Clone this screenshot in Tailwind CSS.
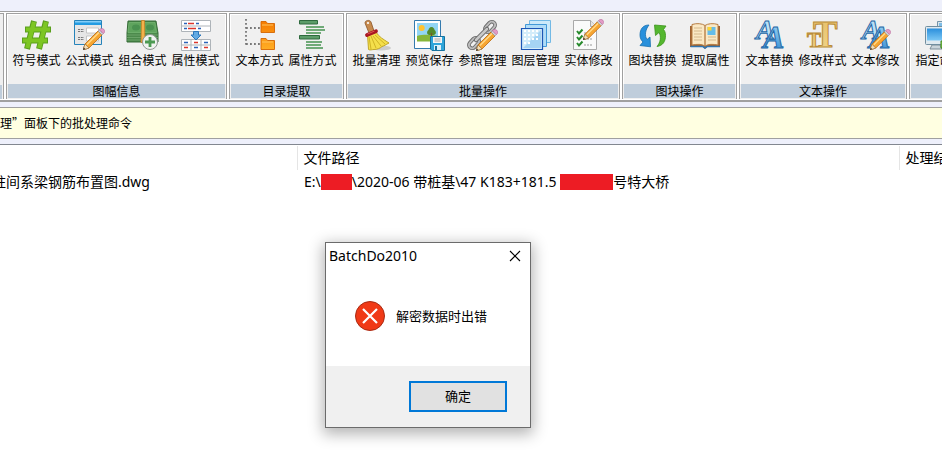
<!DOCTYPE html>
<html lang="zh-CN">
<head>
<meta charset="utf-8">
<meta name="viewport" content="width=device-width, initial-scale=1">
<title>BatchDo2010</title>
<script src="https://cdn.jsdelivr.net/npm/@tailwindcss/browser@4"></script>
</head>
<body class="relative min-h-screen overflow-hidden bg-white font-['Noto_Sans','Noto_Sans_CJK_SC',sans-serif] text-black">

<svg class="absolute size-0" aria-hidden="true">
  <defs>
    <linearGradient id="blue" x1="0" y1="0" x2="0" y2="1"><stop offset="0" stop-color="#a9defa"/><stop offset="1" stop-color="#2c86d0"/></linearGradient>
    <linearGradient id="screen" x1="0" y1="0" x2="0" y2="1"><stop offset="0" stop-color="#2b8fdc"/><stop offset="1" stop-color="#7cc8f5"/></linearGradient>
    <linearGradient id="gold" x1="0" y1="0" x2="0" y2="1"><stop offset="0" stop-color="#e6bd66"/><stop offset="1" stop-color="#f1d68c"/></linearGradient>
    <linearGradient id="folder" x1="0" y1="0" x2="0" y2="1"><stop offset="0" stop-color="#f57c00"/><stop offset="1" stop-color="#ffad24"/></linearGradient>
    <symbol id="pencil" viewBox="0 0 22 22">
      <path d="M0 22 2 16 15 3l4 4L6 20z" fill="#f7a531" stroke="#b9680f" stroke-width=".8"/>
      <path d="M4 16.500 16 4.500" stroke="#ffdb8b" stroke-width="1.400"/>
      <path d="M0 22 2 16l4 4z" fill="#f5dfb8" stroke="#8b6a3d" stroke-width=".6"/>
      <path d="m0 22 .8-2.400L2.400 21z" fill="#333"/>
      <path d="m15 3 1.300-1.300 4 4L19 7z" fill="#d5d9de" stroke="#888" stroke-width=".5"/>
      <path d="M16.300 1.700C18-.2 19.500.2 20.800 1.300c1.500 1.400 1.300 3-.5 4.400z" fill="#e39bc5" stroke="#b56b9b" stroke-width=".6"/>
    </symbol>
    <symbol id="letters" viewBox="0 0 33 33">
      <g font-family="Liberation Serif" font-style="italic" font-weight="bold" stroke="#2467a6" stroke-width="1">
        <text x="3" y="20" font-size="28" fill="#b9e0f6">A</text>
        <text x="10" y="29" font-size="32" fill="url(#blue)">A</text>
      </g>
    </symbol>
  </defs>
</svg>

<header class="bg-[#eef0fb] pt-[11px] pb-[5px]">
  <nav aria-label="功能区" class="flex gap-[2px] overflow-hidden border-t border-b-2 border-[#a0a0a0] bg-white pt-px pb-px font-['Noto_Sans_CJK_SC',sans-serif] text-xs">
    <div class="flex w-1 shrink-0 flex-col border-t border-r border-[#a0a0a0] bg-[#f0f0f0]"><div class="mt-auto mr-px h-[14px] bg-[#bfcddb]"></div></div>

    <section class="flex shrink-0 flex-col border-x border-t border-[#a0a0a0] bg-[#f0f0f0]">
      <div class="flex h-[70px] border-x border-t border-white pt-1 pr-[3px] pl-[2px]">
        <button class="flex w-[53px] flex-col items-center whitespace-nowrap leading-4">
          <svg class="size-[33px]" viewBox="0 0 33 33"><path d="M14 2 7 30M26 2l-7 28M5 10.500h26M2 21.500h26" stroke="#5a9f1c" stroke-width="6" fill="none"/><path d="M14 3 7.300 29M26 3l-6.700 26M6 10.500h24M3 21.500h24" stroke="#7dc623" stroke-width="4.200"/></svg>符号模式</button>
        <button class="flex w-[53px] flex-col items-center whitespace-nowrap leading-4">
          <svg class="size-[33px]" viewBox="0 0 33 33"><path d="M1.500 1.500h27v24h-27z" fill="#e6e6e6" stroke="#2583ba"/><path d="M2 2h26v4H2z" fill="#239be2"/><path d="M2 2h26v1.500H2z" fill="#85cef8"/><path d="M13.500 9h12v5h-12zM13.500 17h12v5h-12z" fill="#fff" stroke="#bbb" stroke-width=".8"/><path d="M5 10.500h6M5 12.500h6M5 18.500h6M5 20.500h6" stroke="#777" stroke-dasharray="2 .8"/><use href="#pencil" x="10" y="9" width="22" height="22"/></svg>公式模式</button>
        <button class="flex w-[53px] flex-col items-center whitespace-nowrap leading-4">
          <svg class="size-[33px]" viewBox="0 0 33 33"><path d="M2 2h28l2 12v9H1v-9z" fill="#4c8a4c" stroke="#356a36"/><path d="M3 3.500h26l1.500 10H2z" fill="#5fa45e" stroke="#78b876" stroke-width=".7"/><path d="M1 16h31M1 18.500h31M1 21h31" stroke="#79ad76" stroke-width=".7"/><ellipse cx="10" cy="8.500" rx="4" ry="3" fill="#4a9150"/><ellipse cx="24" cy="8.500" rx="4" ry="3" fill="#4a9150"/><path d="M15.500 1.500h3l.5 22h-4z" fill="#f4b14b" stroke="#c57a1b" stroke-width=".7"/><circle cx="24" cy="23" r="7.500" fill="#f1f3f1" stroke="#8d9590"/><path d="M24 18v10M19 23h10" stroke="#4c9a52" stroke-width="2.800"/></svg>组合模式</button>
        <button class="flex w-[53px] flex-col items-center whitespace-nowrap leading-4">
          <svg class="size-[33px]" viewBox="0 0 33 33"><path d="M2.500 1.500h29v11h-29zM2.500 20.500h29v11h-29z" fill="#fff" stroke="#aeb4b9"/><path d="M2.500 7h29M2.500 26h29M12 20.500v11M22 20.500v11" stroke="#aeb4b9"/><path d="M5 4.500h3M17 4.500h3M5 9.500h3M19 9.500h3M5 23.500h4M25 23.500h4M15 28.500h4" stroke="#2c63b8" stroke-width="1.400"/><path d="M9 4.500h6M9 9.500h8M15 23.500h4M5 28.500h4M25 28.500h4" stroke="#dc372c" stroke-width="1.400"/><path d="M14.500 12.500h5v3.500h2.500l-5 5-5-5h2.500z" fill="#62aae3" stroke="#2b77bb"/></svg>属性模式</button>
      </div>
      <h2 class="mx-px mb-px h-[14px] bg-[#bfcddb] text-center leading-[14px]">图幅信息</h2>
    </section>

    <section class="flex shrink-0 flex-col border-x border-t border-[#a0a0a0] bg-[#f0f0f0]">
      <div class="flex h-[70px] border-x border-t border-white pt-1 pr-[3px] pl-[2px]">
        <button class="flex w-[53px] flex-col items-center whitespace-nowrap leading-4">
          <svg class="size-[33px]" viewBox="0 0 33 33"><path d="M3 0v26M3 9h14M3 25h14" stroke="#777" stroke-width="1.800" stroke-dasharray="1.800 2.200" fill="none"/><g fill="url(#folder)" stroke="#d56500" stroke-width=".9"><path d="M18 2.500h5l1.500 2h7v9H18zM18 19.500h5l1.500 2h7v9H18z"/></g><path d="M19 6h11M19 23h11" stroke="#ffc45e"/></svg>文本方式</button>
        <button class="flex w-[53px] flex-col items-center whitespace-nowrap leading-4">
          <svg class="size-[33px]" viewBox="0 0 33 33"><path d="M3.500 1.500h18v3.500h-18zM3.500 16.500h20v3.500h-20z" fill="#5c9c69" stroke="#2e6a3e"/><path d="M10 8h18M10 11h19M10 14h15M10 23h16M10 26h15M10 29h17" stroke="#70aa78" stroke-width="1.800"/></svg>属性方式</button>
      </div>
      <h2 class="mx-px mb-px h-[14px] bg-[#bfcddb] text-center leading-[14px]">目录提取</h2>
    </section>

    <section class="flex shrink-0 flex-col border-x border-t border-[#a0a0a0] bg-[#f0f0f0]">
      <div class="flex h-[70px] border-x border-t border-white pt-1 pr-[3px] pl-[2px]">
        <button class="flex w-[53px] flex-col items-center whitespace-nowrap leading-4">
          <svg class="size-[33px]" viewBox="0 0 33 33"><ellipse cx="21" cy="29" rx="10" ry="2.500" fill="#ccc"/><path d="M7.500 16.500 16 13c3 5 7 7 13 11-3 1.500-5 3-7 3.500-2 2-5 3-8 3-2 0-4 1-5.500 0z" fill="#f4df4b" stroke="#b59711" stroke-width=".8"/><path d="m9 18 2 12M11 17l5 12M13 17l8 10M15 16l10 9" stroke="#c5a71c" stroke-width=".8"/><path d="M5 4c0-3 5-3.500 6-1l3 9-5 2z" fill="#c68a4d" stroke="#8a5424" stroke-width=".8"/><circle cx="8" cy="4" r="1.100" fill="#fff"/><path d="m7 16 9-3.700" stroke="#a81722" stroke-width="3.800" stroke-linecap="round"/><path d="m7.500 15 7-3" stroke="#e25355"/></svg>批量清理</button>
        <button class="flex w-[53px] flex-col items-center whitespace-nowrap leading-4">
          <svg class="size-[33px]" viewBox="0 0 33 33"><path d="M1.500 1.500h26v28h-26z" fill="#fff" stroke="#347aae"/><path d="M4 4h21v18H4z" fill="#92d5f4"/><path d="M4 17c8-2 14-1 21 0v5.500H4z" fill="#87b63a"/><circle cx="8.700" cy="9" r="3" fill="#ffc22d"/><path d="M18.500 8c2 0 3 2 3 3 2 1 2 5-1 5h-4c-3 0-3-4-1-5 0-1 1-3 3-3z" fill="#538b2c"/><path d="M18.500 14v6" stroke="#795425" stroke-width="1.200"/><path d="M17.500 17.500h14v14H19l-1.500-1.500z" fill="#2fa5da" stroke="#16729f"/><path d="M20 18h9v6h-9z" fill="#f5f5f5"/><path d="M21.500 20h6M21.500 22h6" stroke="#aaa"/><path d="M21 26h7v5h-7z" fill="#ddf1fa"/><path d="M22 27h2v4h-2z" fill="#16729f"/></svg>预览保存</button>
        <button class="flex w-[53px] flex-col items-center whitespace-nowrap leading-4">
          <svg class="size-[33px]" viewBox="0 0 33 33"><g fill="none"><g stroke="#686868" stroke-width="3.600"><rect x="-6" y="-3.300" width="12" height="6.600" rx="3.300" transform="translate(8 24) rotate(-48)"/><rect x="-6" y="-3.300" width="12" height="6.600" rx="3.300" transform="translate(24 8) rotate(-48)"/></g><g stroke="#bdbdbd" stroke-width="1.900"><rect x="-6" y="-3.300" width="12" height="6.600" rx="3.300" transform="translate(8 24) rotate(-48)"/><rect x="-6" y="-3.300" width="12" height="6.600" rx="3.300" transform="translate(24 8) rotate(-48)"/></g><path d="m10 21 11-11" stroke="#686868" stroke-width="4.500" stroke-linecap="round"/><path d="m10 21 11-11" stroke="#c9c9c9" stroke-width="2.500" stroke-linecap="round"/></g><use href="#pencil" x="10" y="10" width="22" height="22"/></svg>参照管理</button>
        <button class="flex w-[53px] flex-col items-center whitespace-nowrap leading-4">
          <svg class="size-[33px]" viewBox="0 0 33 33"><path d="M10.500 1.500h21v22h-21z" fill="#cceafa" stroke="#72b9e5"/><path d="M6.500 5.500h21v22h-21z" fill="#b0dcf7" stroke="#4299d8"/><path d="M2.500 9.500h21v21h-21z" fill="#d3ecfa" stroke="#1d56b5" stroke-width="1.200"/><path d="M4 29 22 11v18z" fill="#a5d4f4"/><path d="M6 11v14M10 11v14M14 11v12M18 11v10" stroke="#fff" stroke-width="2" stroke-dasharray="2 2"/></svg>图层管理</button>
        <button class="flex w-[53px] flex-col items-center whitespace-nowrap leading-4">
          <svg class="size-[33px]" viewBox="0 0 33 33"><path d="M1.500 1.500h17l6 6v23h-23z" fill="#fafafa" stroke="#a9a9a9"/><path d="M18.500 1.500v6h6" fill="#e4e4e4" stroke="#a9a9a9"/><path d="m5 12 2 2.500 3.500-4M5 18l2 2.500 3.500-4M5 24l2 2.500 3.500-4" stroke="#278a2c" stroke-width="2" fill="none"/><path d="M12 14h9M12 20h9M12 26h9" stroke="#999" stroke-dasharray="2 1"/><use href="#pencil" x="11" y="0" width="21" height="21"/></svg>实体修改</button>
      </div>
      <h2 class="mx-px mb-px h-[14px] bg-[#bfcddb] text-center leading-[14px]">批量操作</h2>
    </section>

    <section class="flex shrink-0 flex-col border-x border-t border-[#a0a0a0] bg-[#f0f0f0]">
      <div class="flex h-[70px] border-x border-t border-white pt-1 pr-[3px] pl-[2px]">
        <button class="flex w-[53px] flex-col items-center whitespace-nowrap leading-4">
          <svg class="size-[33px]" viewBox="0 0 33 33"><path d="M13 6C7 6 4 10 4 16c0 3 1 5 3 7l-3 3.500 10.500 1.300L14 18l-3 2.500C8.500 17 9 11 13 6z" fill="#2990dc" stroke="#176fae" stroke-width=".8"/><path d="M21 27.500c6-1 8.500-5 8.500-11 0-3-1-5-2-6L30 7 18.500 6l1 10.500 3.500-3c2.500 4 1.500 10-2 14z" fill="#55b72f" stroke="#3b9319" stroke-width=".8"/></svg>图块替换</button>
        <button class="flex w-[53px] flex-col items-center whitespace-nowrap leading-4">
          <svg class="size-[33px]" viewBox="0 0 33 33"><path d="M1 7h30v21H18l-2 2-2-2H1z" fill="#9e6231"/><path d="M1.500 27.500H14l2 1.500 2-1.500h13" stroke="#3275ae" stroke-width="1.600" fill="none"/><path d="M3 5.500c5-1.500 10-1 13 1 3-2 8-2.500 13-1V26c-5-1-10-1-13 1-3-2-8-2-13-1z" fill="#fae8c4" stroke="#b77d42"/><path d="M16 6.500V27" stroke="#bb8750" stroke-width="1.500"/><path d="M5 9h8M5 12h8M5 15h8M5 18h8M5 21h8M19 18h8M19 21h8" stroke="#d3b78c" stroke-width="1.200"/><path d="M18.500 8h8v8h-8z" fill="#65bce8"/><path d="M18.500 8h4v3.500h-4z" fill="#ffd531"/></svg>提取属性</button>
      </div>
      <h2 class="mx-px mb-px h-[14px] bg-[#bfcddb] text-center leading-[14px]">图块操作</h2>
    </section>

    <section class="flex shrink-0 flex-col border-x border-t border-[#a0a0a0] bg-[#f0f0f0]">
      <div class="flex h-[70px] border-x border-t border-white pt-1 pr-[3px] pl-[2px]">
        <button class="flex w-[53px] flex-col items-center whitespace-nowrap leading-4">
          <svg class="size-[33px]" viewBox="0 0 33 33"><use href="#letters" width="33" height="33"/></svg>文本替换</button>
        <button class="flex w-[53px] flex-col items-center whitespace-nowrap leading-4">
          <svg class="size-[33px]" viewBox="0 0 33 33"><g font-family="Liberation Serif" font-weight="bold" fill="url(#gold)" stroke="#b98a35" stroke-width="1"><text x="7" y="28" font-size="37">T</text><text x="1" y="28" font-size="21">T</text></g></svg>修改样式</button>
        <button class="flex w-[53px] flex-col items-center whitespace-nowrap leading-4">
          <svg class="size-[33px]" viewBox="0 0 33 33"><use href="#letters" width="33" height="33"/><use href="#pencil" x="11" y="10" width="21" height="21"/></svg>文本修改</button>
      </div>
      <h2 class="mx-px mb-px h-[14px] bg-[#bfcddb] text-center leading-[14px]">文本操作</h2>
    </section>

    <section class="flex min-w-[170px] grow flex-col border-x border-t border-[#a0a0a0] bg-[#f0f0f0]">
      <div class="flex h-[70px] border-x border-t border-white pt-1 pr-[3px] pl-[2px]">
        <button class="flex w-[53px] flex-col items-center whitespace-nowrap leading-4">
          <svg class="size-[33px]" viewBox="0 0 33 33"><path d="M14.500 2.500h18v16h-18z" fill="#d8e5ec" stroke="#7393a8"/><path d="M16 4h15v12H16z" fill="#7ebde6"/><path d="M9 26h8l2 4H7z" fill="#cad4da" stroke="#7c8d98"/><rect x="2.500" y="7.500" width="22" height="18" rx="1" fill="#dfe9ef" stroke="#718e9f"/><path d="M4 9.500h19v12H4z" fill="url(#screen)"/><path d="M18 22h12v7H18z" fill="#8ed154" stroke="#398418"/></svg>指定命令</button>
      </div>
      <div class="mx-px mb-px h-[14px] bg-[#bfcddb]"></div>
    </section>
  </nav>
</header>

<div class="border-b border-[#828790] bg-[#eef0fb] pb-[5px]">
  <p class="border-y border-[#a0a0a0] bg-[#ffffe1] pt-[6px] pb-[6px] font-['Noto_Sans_CJK_SC',sans-serif] text-xs leading-[18px]">理”面板下的批处理命令</p>
</div>

<main class="pt-px">
  <table class="w-full table-fixed border-collapse text-left text-sm leading-6 whitespace-nowrap">
    <colgroup><col class="w-[297px]"><col class="w-[602px]"><col></colgroup>
    <thead>
      <tr>
        <th aria-label="文件名" class="p-0"></th>
        <th class="border-l border-[#e5e5e5] p-0 pl-[6px] font-normal">文件路径</th>
        <th class="border-l border-[#e5e5e5] p-0 pl-[6px] font-normal">处理结果</th>
      </tr>
    </thead>
    <tbody>
      <tr>
        <td class="p-0"><span class="-ml-2">柱间系梁钢筋布置图.dwg</span></td>
        <td class="p-0 pl-[7px]"><span class="flex items-center whitespace-pre">E:\<span class="h-4 w-[31px] bg-[#ed1c24]"></span>\2020-06 带桩基\47 K183+181.5 <span class="h-4 w-[53px] bg-[#ed1c24]"></span>号特大桥</span></td>
        <td class="p-0"></td>
      </tr>
    </tbody>
  </table>
</main>

<div role="alertdialog" aria-labelledby="dialog-title" aria-describedby="dialog-text" class="absolute top-[242px] left-[325px] w-[206px] border border-[#6b6b6b] bg-white shadow-[0_4px_14px_2px_rgba(0,0,0,0.3)]">
  <div class="flex items-center justify-between pr-2 pl-[3px]">
    <h1 id="dialog-title" class="text-sm leading-[26px]">BatchDo2010</h1>
    <button aria-label="关闭" class="p-px"><svg class="size-3" viewBox="0 0 12 12"><path d="m1 1 10 10M11 1 1 11" stroke="#000" stroke-width="1.100"/></svg></button>
  </div>
  <div class="flex items-center gap-[11px] pt-[32px] pr-4 pb-[35px] pl-[29px]">
    <svg class="size-[30px] shrink-0" viewBox="0 0 30 30"><circle cx="15" cy="15" r="14.500" fill="#f03a17" stroke="#a82b14"/><path d="m8 8 14 14M22 8 8 22" stroke="#fff" stroke-width="2.200"/></svg>
    <p id="dialog-text" class="text-[13px] leading-5 whitespace-nowrap">解密数据时出错</p>
  </div>
  <div class="flex justify-end bg-[#f0f0f0] pt-[15px] pr-[23px] pb-[15px]">
    <button class="border-2 border-[#0078d7] bg-[#e1e1e1] px-[34px] py-[3px] text-[13px] leading-[21px]">确定</button>
  </div>
</div>
</body>
</html>
